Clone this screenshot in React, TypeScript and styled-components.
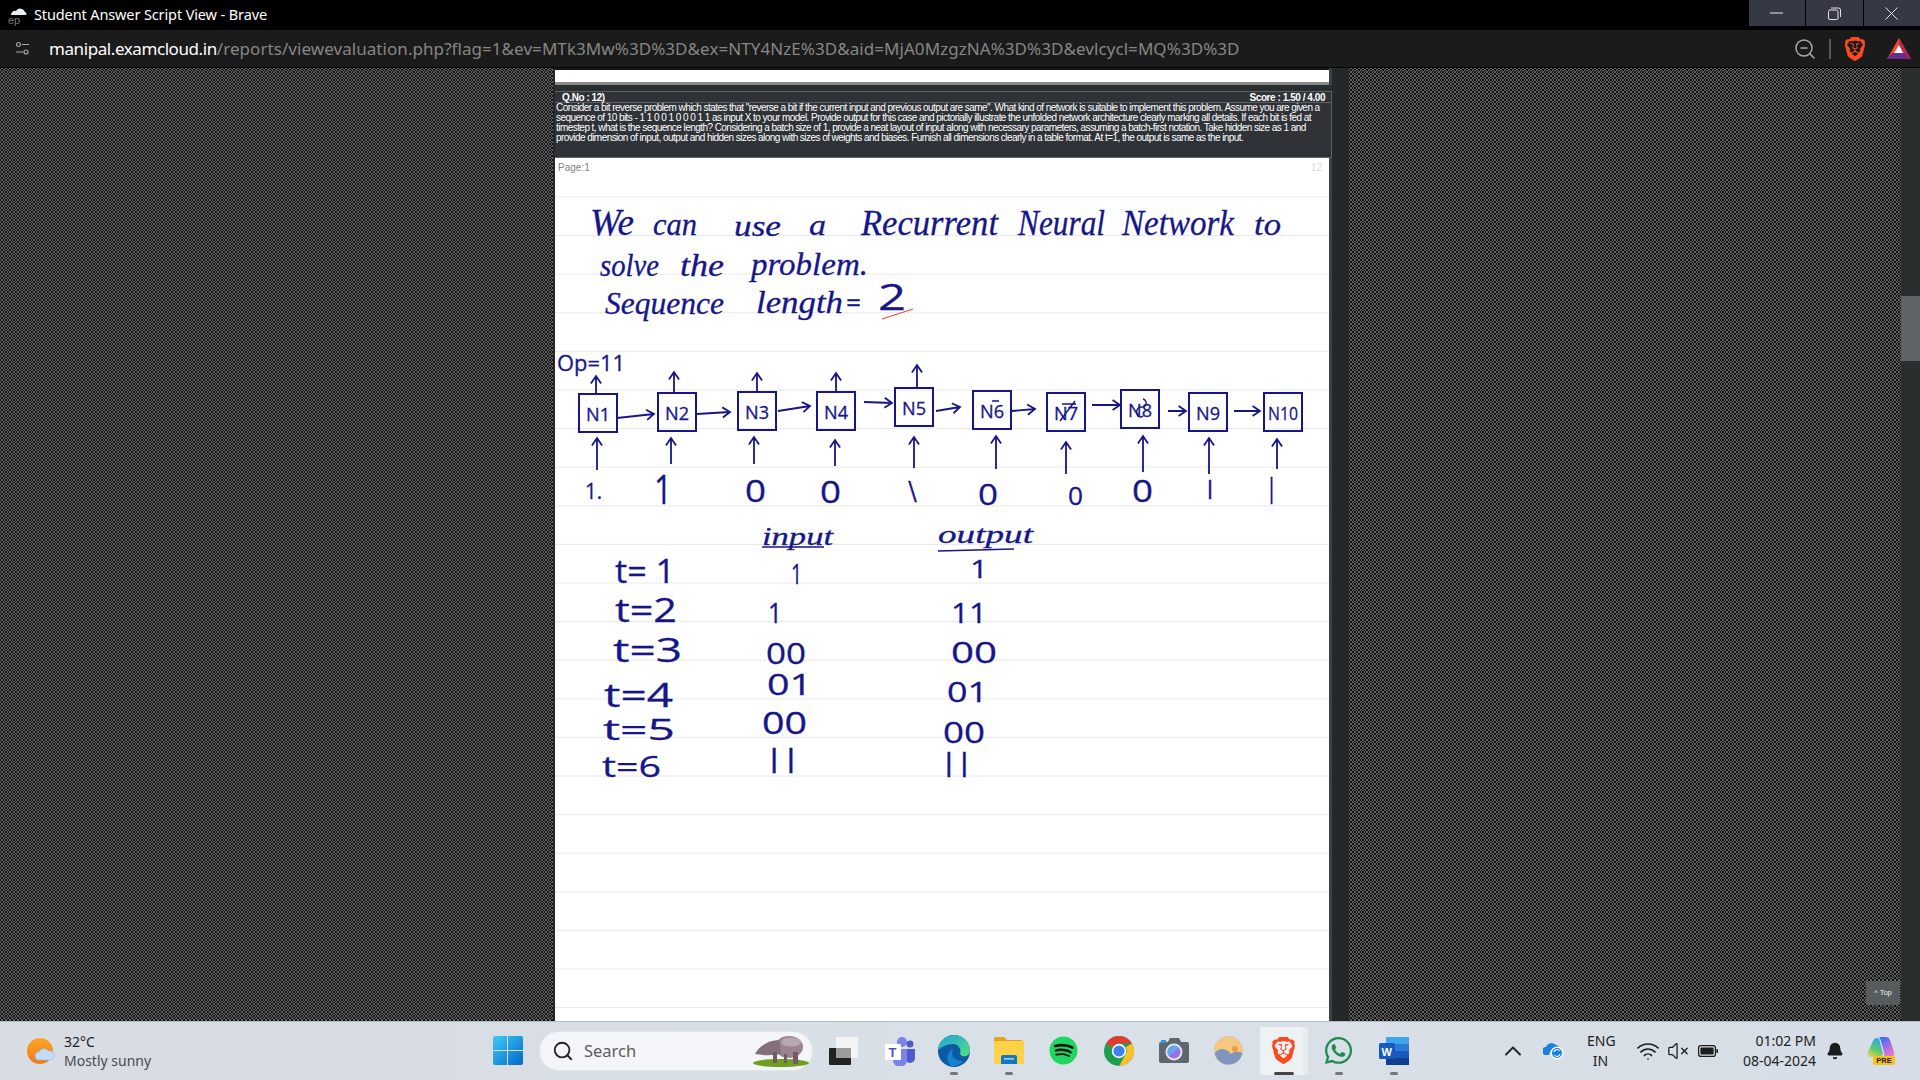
import React from 'react';
import styled, { createGlobalStyle } from 'styled-components';
import { FaSpotify, FaWhatsapp } from 'react-icons/fa';
import { SiBrave } from 'react-icons/si';
import { Bell, ChevronUp, Search, VolumeX, Wifi, ZoomOut } from 'lucide-react';

const cell = (x: number, y: number) => `<rect x='${x}' y='${y}' width='1' height='1'/>`;
const bits = ['01100110', '10011001', '10010110', '01101001', '01101001', '10010110', '10011001', '01100110'];
const weave = bits.map((row, y) => row.split('').map((b, x) => (b === '1' ? cell(x, y) : '')).join('')).join('');
const weaveUri = `url("data:image/svg+xml,${encodeURIComponent(
  `<svg xmlns='http://www.w3.org/2000/svg' width='8' height='8' shape-rendering='crispEdges'><rect width='8' height='8' fill='#121212'/><g fill='#626262'>${weave}</g></svg>`
)}")`;

const GlobalStyle = createGlobalStyle`
  html, body { margin: 0; padding: 0; background: #000; }
  body { font-family: "Noto Sans", "Open Sans", sans-serif; }
`;

const Screen = styled.div`
  width: 1920px;
  height: 1080px;
  display: flex;
  flex-direction: column;
  overflow: hidden;
  position: relative;
`;

const TitleBar = styled.div`
  height: 30px;
  background: #000;
  display: flex;
  align-items: flex-start;
  color: #fff;
`;

const TitleFavicon = styled.div`
  width: 20px;
  height: 20px;
  margin: 6px 0 0 8px;
  color: #777;
  font: 11px/1 "Liberation Sans", sans-serif;
`;

const FaviconLetters = styled.div`
  margin-top: -3px;
`;

const TitleText = styled.div`
  margin-left: 6px;
  line-height: 29px;
  font-size: 14.5px;
  font-family: "Noto Sans", sans-serif;
  letter-spacing: -0.12px;
`;

const WindowButtons = styled.div`
  margin-left: auto;
  display: flex;
  gap: 1px;
`;

const WindowButton = styled.div`
  width: 56.5px;
  height: 26px;
  background: #363846;
  display: flex;
  align-items: center;
  justify-content: center;
  color: #e4e4e8;
`;

const AddressBar = styled.div`
  height: 37px;
  background: #1b1b1b;
  border-bottom: 1px solid #050505;
  display: flex;
  align-items: center;
  padding-left: 15px;
  color: #a8a8a8;
`;

const Url = styled.div`
  margin-left: 19px;
  font-size: 17px;
  letter-spacing: 0.06px;
  color: #868686;
  white-space: nowrap;
`;

const UrlHost = styled.span`
  color: #fff;
  letter-spacing: -0.42px;
`;

const AddressTools = styled.div`
  margin-left: auto;
  display: flex;
  align-items: center;
  padding-right: 9px;
`;

const ToolDivider = styled.div`
  width: 2px;
  height: 20px;
  margin: 0 12px 0 12px;
  background: #5a5a5a;
`;

const BatSlot = styled.div`
  margin-left: 20px;
  display: flex;
`;

const Main = styled.div`
  flex: 1;
  display: flex;
  min-height: 0;
  position: relative;
`;

const Backdrop = styled.div<{ $width: number }>`
  width: ${(p) => p.$width}px;
  background-image: ${weaveUri};
`;

const Sheet = styled.div`
  width: 777px;
  background: #3c4145;
  border-left: 2px solid #24282a;
  display: flex;
  flex-direction: column;
`;

const Gutter = styled.div`
  width: 17px;
  background: #23282a;
`;

const Scrollbar = styled.div`
  width: 19px;
  background: #2a2e2f;
  padding-top: 228px;
`;

const ScrollThumb = styled.div`
  height: 65px;
  background: #5e6367;
`;

const TopButton = styled.div`
  position: absolute;
  right: 20px;
  bottom: 16px;
  width: 34px;
  height: 24px;
  background: #565b5d;
  color: #e8f0f4;
  font: 7.5px/24px "Liberation Sans", sans-serif;
  text-align: center;
`;

const TopBand = styled.div`
  height: 12px;
  flex: none;
  margin-right: 3px;
  background: #fff;
  border-top: 2px solid #16191b;
  border-bottom: 3px solid #8a8a8a;
`;

const BandGap = styled.div`
  height: 6px;
  flex: none;
  background: #2a2d30;
`;

const QuestionPanel = styled.div`
  height: 65px;
  flex: none;
  background: #2f3338;
  border: 1px solid #5b6268;
  border-left-width: 0;
  color: #fff;
  font-family: "Liberation Sans", sans-serif;
`;

const QuestionHead = styled.div`
  height: 10px;
  display: flex;
  justify-content: space-between;
  padding: 0 6px 0 7px;
  font-size: 10px;
  line-height: 11px;
  font-weight: bold;
  letter-spacing: -0.45px;
  border-bottom: 1px solid #5b6268;
`;

const QuestionLine = styled.div`
  font-size: 10px;
  line-height: 10px;
  letter-spacing: -0.55px;
  white-space: nowrap;
  padding-left: 1px;
`;

const AnswerPage = styled.div`
  flex: 1;
  min-height: 0;
  margin-right: 3px;
  background: #fff;
  display: flex;
  flex-direction: column;
`;

const PageHead = styled.div`
  height: 20px;
  flex: none;
  display: flex;
  justify-content: space-between;
  padding: 4px 7px 0 3px;
  box-sizing: border-box;
  font: 10px/12px "Liberation Sans", sans-serif;
  color: #808080;
`;

const PageNo = styled.span`
  color: #dcdcdc;
`;

const ScanSvg = styled.svg`
  display: block;
  flex: 1;
  min-height: 0;
  width: 100%;
  stroke: #16168a;
  fill: none;
`;

const Rule = styled.line`
  stroke: #e2e2e2;
  stroke-width: 1;
  stroke-dasharray: 3 1;
`;

const Ink = styled.text<{ $script?: boolean }>`
  fill: #16168a;
  stroke: #16168a;
  stroke-width: 0.3;
  font-family: ${(p) => (p.$script ? '"Liberation Serif", serif' : '"Open Sans", sans-serif')};
  font-style: ${(p) => (p.$script ? 'italic' : 'normal')};
`;

const Taskbar = styled.div`
  height: 59px;
  flex: none;
  background: linear-gradient(90deg, #d8dce3, #d9e0e7 60%, #d6dde6);
  display: flex;
  align-items: center;
  color: #1d1d1d;
  border-top: 1px solid #b6bac0;
  box-sizing: border-box;
  padding-bottom: 1px;
`;

const Weather = styled.div`
  width: 480px;
  flex: none;
  padding-left: 27px;
  box-sizing: border-box;
  display: flex;
  align-items: center;
  gap: 9px;
`;

const WeatherText = styled.div`
  font-size: 14px;
  line-height: 19px;
`;

const WeatherNote = styled.div`
  color: #4b4b4b;
`;

const TaskCell = styled.div<{ $state?: 'running' | 'active' }>`
  width: 55px;
  height: 48px;
  flex: none;
  display: flex;
  align-items: center;
  justify-content: center;
  position: relative;
  border-radius: 5px;
  ${(p) =>
    p.$state === 'active'
      ? `
    background: linear-gradient(#eef2f5, #eef2f5) 4px 0 / 43px 48px no-repeat,
      linear-gradient(#e6ebf0, #e6ebf0) 47px 0 / 5px 48px no-repeat;
    `
      : ''}
  &::after {
    content: '';
    display: ${(p) => (p.$state ? 'block' : 'none')};
    position: absolute;
    bottom: 0;
    left: 50%;
    transform: translateX(-50%);
    width: ${(p) => (p.$state === 'active' ? '20px' : '8px')};
    height: 3px;
    border-radius: 2px;
    background: ${(p) => (p.$state === 'active' ? '#444' : '#777')};
  }
`;

const SearchPill = styled.div`
  width: 272px;
  height: 38px;
  margin: 0 4px 0 5px;
  flex: none;
  border-radius: 19px;
  background: #f3f5f8;
  box-shadow: 0 0 0 1px #e2e6ea;
  display: flex;
  align-items: center;
  padding: 0 3px 0 12px;
  box-sizing: border-box;
  color: #5c5c5c;
  font-size: 16.5px;
`;

const SearchLabel = styled.span`
  margin-left: 10px;
  flex: 1;
`;

const SpotifyGlyph = styled(FaSpotify)`
  background: radial-gradient(circle, #111 60%, transparent 63%);
  border-radius: 50%;
`;

const TrayItem = styled.div<{ $w: number; $gap: number }>`
  width: ${(p) => p.$w}px;
  margin-left: ${(p) => p.$gap}px;
  flex: none;
  display: flex;
  align-items: center;
  justify-content: center;
  & > svg {
    flex: none;
  }
`;

const TrayText = styled.div<{ $right?: boolean }>`
  font-size: 14px;
  line-height: 20px;
  white-space: nowrap;
  text-align: ${(p) => (p.$right ? 'right' : 'center')};
  width: 100%;
  color: #222;
`;

const ProIcon = styled.div`
  position: relative;
  width: 29px;
  height: 28px;
`;

const PreBadge = styled.span`
  position: absolute;
  right: 0;
  bottom: 0;
  width: 22px;
  height: 9px;
  border-radius: 2px;
  background: #f6c31c;
  color: #222;
  font: bold 7.5px/9px "Liberation Sans", sans-serif;
  text-align: center;
`;

const TeamsT = styled.text`
  fill: #4b53bc;
  font: bold 13px "Liberation Sans", sans-serif;
`;

const WordW = styled.text`
  fill: #fff;
  font: bold 11px "Liberation Sans", sans-serif;
`;

const question = [
  'Consider a bit reverse problem which states that "reverse a bit if the current input and previous output are same". What kind of network is suitable to implement this problem. Assume you are given a',
  'sequence of 10 bits - 1 1 0 0 1 0 0 0 1 1 as input X to your model. Provide output for this case and pictorially illustrate the unfolded network architecture clearly marking all details. If each bit is fed at',
  'timestep t, what is the sequence length? Considering a batch size of 1, provide a neat layout of input along with necessary parameters, assuming a batch-first notation. Take hidden size as 1 and',
  'provide dimension of input, output and hidden sizes along with sizes of weights and biases. Furnish all dimensions clearly in a table format. At t=1, the output is same as the input.',
];

type Word = [string, number, number, number, number];

// text, left x, baseline y, width, font size (page pixels of the scan)
const scriptWords: Word[] = [
  ['We', 590, 235, 44, 38],
  ['can', 653, 235, 44, 32],
  ['use', 734, 236, 47, 30],
  ['a', 809, 235, 17, 30],
  ['Recurrent', 861, 235, 137, 36],
  ['Neural', 1018, 235, 87, 36],
  ['Network', 1122, 235, 112, 36],
  ['to', 1254, 235, 27, 32],
  ['solve', 600, 276, 59, 32],
  ['the', 680, 276, 44, 32],
  ['problem.', 751, 275, 117, 32],
  ['Sequence', 605, 314, 119, 32],
  ['length', 756, 313, 87, 32],
  ['input', 762, 545, 71, 26],
  ['output', 938, 543, 95, 26],
];

const plainWords: Word[] = [
  ['=', 846, 312, 15, 26],
  ['2', 878, 310, 28, 36],
  ['Op=11', 557, 371, 68, 22],
  ['1.', 585, 499, 17, 22],
  ['1', 654, 504, 18, 40],
  ['0', 745, 502, 21, 31],
  ['0', 820, 503, 21, 31],
  ['\\', 908, 502, 9, 30],
  ['0', 978, 505, 20, 29],
  ['0', 1068, 505, 15, 26],
  ['0', 1132, 502, 21, 31],
  ['l', 1207, 499, 6, 26],
  ['l', 1269, 504, 5, 36],
  ['t= 1', 615, 583, 60, 32],
  ['1', 791, 584, 11, 28],
  ['1', 970, 578, 18, 26],
  ['t=2', 615, 622, 62, 32],
  ['1', 768, 623, 14, 28],
  ['11', 951, 623, 36, 28],
  ['t=3', 613, 662, 69, 32],
  ['00', 766, 664, 40, 29],
  ['00', 951, 663, 46, 29],
  ['t=4', 604, 707, 69, 32],
  ['01', 767, 695, 45, 29],
  ['01', 947, 702, 41, 28],
  ['t=5', 603, 740, 72, 30],
  ['00', 762, 734, 45, 31],
  ['00', 943, 743, 42, 29],
  ['t=6', 602, 777, 59, 30],
  ['l l', 770, 773, 25, 32],
  ['l l', 945, 777, 23, 32],
];

const boxes: [string, number, number][] = [
  ['N1', 579, 394],
  ['N2', 658, 393],
  ['N3', 738, 392],
  ['N4', 817, 392],
  ['N5', 895, 388],
  ['N6', 973, 391],
  ['N7', 1047, 393],
  ['N8', 1121, 390],
  ['N9', 1189, 393],
  ['N10', 1264, 393],
];

const arrows: [number, number, number, number][] = [
  [596, 394, 596, 376],
  [674, 393, 674, 372],
  [757, 392, 757, 373],
  [836, 393, 836, 373],
  [917, 387, 917, 365],
  [597, 470, 597, 438],
  [671, 464, 671, 438],
  [754, 464, 754, 437],
  [835, 466, 835, 440],
  [914, 468, 914, 437],
  [996, 469, 996, 436],
  [1066, 474, 1066, 442],
  [1143, 472, 1143, 436],
  [1209, 474, 1209, 438],
  [1277, 469, 1277, 439],
  [617, 418, 654, 414],
  [697, 414, 730, 412],
  [778, 411, 810, 406],
  [864, 402, 892, 403],
  [936, 411, 960, 407],
  [1012, 411, 1035, 409],
  [1092, 405, 1120, 405],
  [1168, 411, 1186, 411],
  [1234, 411, 1260, 411],
];

const ruleYs = Array.from({ length: 22 }, (_, i) => 197 + i * 38.6);

function Arrow({ from }: { from: [number, number, number, number] }) {
  const [x1, y1, x2, y2] = from;
  const a = Math.atan2(y2 - y1, x2 - x1);
  const len = 9;
  const hx1 = x2 - len * Math.cos(a - 0.6);
  const hy1 = y2 - len * Math.sin(a - 0.6);
  const hx2 = x2 - len * Math.cos(a + 0.6);
  const hy2 = y2 - len * Math.sin(a + 0.6);
  return <path d={`M${x1} ${y1}L${x2} ${y2}M${hx1} ${hy1}L${x2} ${y2}L${hx2} ${hy2}`} strokeWidth={1.8} />;
}

function AnswerScan() {
  return (
    <ScanSvg viewBox="0 0 774 843" preserveAspectRatio="xMinYMin slice">
      <g transform="translate(-555 -178)">
        {ruleYs.map((y) => (
          <Rule key={y} x1={555} x2={1329} y1={y} y2={y} />
        ))}
        {scriptWords.map(([t, x, y, w, s]) => (
          <Ink key={`${t}${x}`} $script x={x} y={y} textLength={w} lengthAdjust="spacingAndGlyphs" fontSize={s}>
            {t}
          </Ink>
        ))}
        {plainWords.map(([t, x, y, w, s]) => (
          <Ink key={`${t}${x}${y}`} x={x} y={y} textLength={w} lengthAdjust="spacingAndGlyphs" fontSize={s}>
            {t}
          </Ink>
        ))}
        <path d="M882 319L913 309" stroke="#f44" strokeWidth={1.2} />
        <path d="M762 547H824M938 551L1014 549" strokeWidth={1.6} />
        {boxes.map(([label, x, y]) => (
          <g key={label}>
            <rect x={x} y={y} width={38} height={38} strokeWidth={2} />
            <Ink
              x={x + (label === 'N10' ? 4 : 7)}
              y={y + 27}
              textLength={label === 'N10' ? 30 : 24}
              lengthAdjust="spacingAndGlyphs"
              fontSize={19}
            >
              {label}
            </Ink>
          </g>
        ))}
        <path d="M1060 421L1075 401M1062 404H1076M992 401H999M1143 399a4 4 0 1 1 -2 8a4 5 0 1 0 2 9" strokeWidth={1.4} />
        {arrows.map((a) => (
          <Arrow key={a.join()} from={a} />
        ))}
      </g>
    </ScanSvg>
  );
}

function TuneIcon() {
  return (
    <svg width="15" height="15" viewBox="0 0 15 15" fill="none" stroke="#a8a8a8" strokeWidth="1.2">
      <circle cx="3.5" cy="3.5" r="2" />
      <path d="M7 3.5H14M1 11H8" />
      <circle cx="11" cy="11" r="2" />
    </svg>
  );
}

function BatIcon() {
  return (
    <svg width="24" height="21" viewBox="0 0 24 21">
      <path d="M12 0L24 21H0Z" fill="#ff4724" />
      <path d="M0 21L5 15H19L24 21Z" fill="#662d91" />
      <path d="M12 7L17 15H7Z" fill="#fff" />
      <path d="M12 0L24 21H19L12 7Z" fill="#9e1f63" opacity="0.7" />
    </svg>
  );
}

function WeatherIcon() {
  return (
    <svg width="28" height="26" viewBox="0 0 28 26">
      <defs>
        <linearGradient id="sun" x1="0" y1="0" x2="0" y2="1">
          <stop offset="0" stopColor="#f9a825" />
          <stop offset="1" stopColor="#f0781c" />
        </linearGradient>
      </defs>
      <circle cx="13" cy="13" r="13" fill="url(#sun)" />
      <path d="M12 22a4 4 0 0 1 0-8 5 5 0 0 1 9-1 4.5 4.5 0 0 1 3 9Z" fill="#c4dcf7" stroke="#8fb8e6" strokeWidth="0.6" />
    </svg>
  );
}

function StartIcon() {
  return (
    <svg width="30" height="29" viewBox="0 0 30 29">
      <defs>
        <linearGradient id="win" x1="0" y1="0" x2="1" y2="1">
          <stop offset="0" stopColor="#3ccbf8" />
          <stop offset="1" stopColor="#0667c8" />
        </linearGradient>
      </defs>
      <path d="M0 2a2 2 0 0 1 2-2H14V14H0ZM15 0H28a2 2 0 0 1 2 2V14H15ZM0 15H14V29H2a2 2 0 0 1-2-2ZM15 15H30V27a2 2 0 0 1-2 2H15Z" fill="url(#win)" />
    </svg>
  );
}

function TapirPicture() {
  return (
    <svg width="58" height="33" viewBox="0 0 58 33">
      <ellipse cx="30" cy="29" rx="28" ry="4" fill="#6f9f1c" />
      <ellipse cx="38" cy="13" rx="14" ry="11" fill="#9c8390" />
      <path d="M28 6C18 6 8 12 4 20C10 21 18 22 30 20Z" fill="#84707d" />
      <path d="M22 18H26V29H22ZM42 18H47V30H42ZM33 20H36V29H33Z" fill="#6e5c68" />
      <ellipse cx="40" cy="8" rx="10" ry="4.5" fill="#b8a6b0" />
    </svg>
  );
}

function TaskViewIcon() {
  return (
    <svg width="30" height="28" viewBox="0 0 30 28">
      <rect x="0" y="11" width="22" height="17" rx="1" fill="#222" />
      <rect x="7" y="0" width="22" height="21" rx="1" fill="#f4f4f4" />
      <rect x="7" y="11" width="15" height="10" fill="#9c9c9c" />
    </svg>
  );
}

function TeamsIcon() {
  return (
    <svg width="32" height="30" viewBox="0 0 32 30">
      <circle cx="19" cy="6" r="5" fill="#7b83eb" />
      <circle cx="27" cy="8" r="3.5" fill="#5059c9" />
      <path d="M22 13H32V22a5 5 0 0 1-10 0Z" fill="#5059c9" />
      <path d="M10 13H24V24a7 7 0 0 1-14 0Z" fill="#7b83eb" />
      <rect x="2" y="8" width="16" height="16" rx="1" fill="#fff" />
      <TeamsT x="5.5" y="21">T</TeamsT>
    </svg>
  );
}

function EdgeIcon() {
  return (
    <svg width="32" height="32" viewBox="0 0 32 32">
      <defs>
        <linearGradient id="edgeTop" x1="0" y1="0" x2="1" y2="1">
          <stop offset="0" stopColor="#1ba3dc" />
          <stop offset="1" stopColor="#54e07c" />
        </linearGradient>
      </defs>
      <circle cx="16" cy="16" r="16" fill="#0c59a4" />
      <path d="M0 15C1 6 8 0 16 0C25 0 32 7 32 15C32 22 24 23 22 19C24 14 20 9 15 9C8 9 4 12 0 15Z" fill="url(#edgeTop)" />
      <path d="M13 31C8 27 8 17 15 14C12 20 17 27 25 26C22 30 17 32 13 31Z" fill="#1383cf" />
    </svg>
  );
}

function FolderIcon() {
  return (
    <svg width="30" height="27" viewBox="0 0 30 27">
      <path d="M0 2a2 2 0 0 1 2-2H10L13 3H28V7H0Z" fill="#e0a31b" />
      <rect x="0" y="4" width="30" height="23" rx="1" fill="#fdd249" />
      <path d="M7 27V20a2 2 0 0 1 2-2H21a2 2 0 0 1 2 2V27Z" fill="#1277c2" />
      <rect x="10" y="21" width="10" height="1.6" fill="#9bd1f2" />
    </svg>
  );
}

function ChromeIcon() {
  return (
    <svg width="30" height="30" viewBox="0 0 30 30">
      <circle cx="15" cy="15" r="15" fill="#1e9e4f" />
      <path d="M15 0A15 15 0 0 1 28 7.5H15A7.5 7.5 0 0 0 8.5 11.3L2 7.5A15 15 0 0 1 15 0Z" fill="#e33b2e" />
      <path d="M28 7.5A15 15 0 0 1 15 30L21.5 18.8A7.5 7.5 0 0 0 21.5 11.2Z" fill="#fbc02d" />
      <circle cx="15" cy="15" r="7.2" fill="#fff" />
      <circle cx="15" cy="15" r="5.6" fill="#3f7ff0" />
    </svg>
  );
}

function CameraIcon() {
  return (
    <svg width="30" height="25" viewBox="0 0 30 25">
      <path d="M2 4H9L11 0H20L22 4H28a2 2 0 0 1 2 2V23a2 2 0 0 1-2 2H2a2 2 0 0 1-2-2V6a2 2 0 0 1 2-2Z" fill="#5f6670" />
      <rect x="2" y="2" width="5" height="3" fill="#2f9be0" />
      <circle cx="15" cy="14" r="8.5" fill="#e4e6ea" />
      <circle cx="15" cy="14" r="6.5" fill="#a06fe6" />
      <path d="M15 7.5a6.5 6.5 0 0 0-5 10.6L20 10A6.5 6.5 0 0 0 15 7.5Z" fill="#5ea8f0" />
    </svg>
  );
}

function PhotosIcon() {
  return (
    <svg width="29" height="29" viewBox="0 0 29 29">
      <defs>
        <clipPath id="photoClip">
          <circle cx="14.5" cy="14.5" r="14" />
        </clipPath>
      </defs>
      <circle cx="14.5" cy="14.5" r="14.5" fill="#c2c6cc" />
      <g clipPath="url(#photoClip)">
        <rect width="29" height="29" fill="#f8c77e" />
        <path d="M0 18C6 10 13 13 17 18C21 15 26 15 29 18V29H0Z" fill="#7f95bd" />
        <circle cx="21" cy="13" r="3" fill="#ee9a4d" />
      </g>
    </svg>
  );
}

function WordIcon() {
  return (
    <svg width="30" height="28" viewBox="0 0 30 28">
      <rect x="7" y="0" width="23" height="28" rx="1.5" fill="#2b7cd3" />
      <rect x="7" y="0" width="23" height="7" fill="#41a5ee" />
      <rect x="7" y="14" width="23" height="7" fill="#185abd" />
      <rect x="7" y="21" width="23" height="7" fill="#103f91" />
      <rect x="0" y="6" width="16" height="16" rx="1.5" fill="#185abd" />
      <WordW x="2.5" y="18.5">W</WordW>
    </svg>
  );
}

function OneDriveIcon() {
  return (
    <svg width="21" height="19" viewBox="0 0 21 19">
      <path d="M3 14a4 4 0 0 1 0-8 6 6 0 0 1 10-2 4.5 4.5 0 0 1 4 5H8L6 14Z" fill="#1a82dc" />
      <circle cx="14" cy="12" r="6.5" fill="#fff" />
      <circle cx="14" cy="12" r="5" fill="#1a82dc" />
      <path d="M11 11a3 3 0 0 1 5.5-1M17 13a3 3 0 0 1-5.5 1" stroke="#fff" strokeWidth="1.1" fill="none" />
    </svg>
  );
}

function BatteryIcon() {
  return (
    <svg width="20" height="12" viewBox="0 0 20 12">
      <rect x="0.6" y="0.6" width="16.8" height="10.8" rx="2.2" fill="none" stroke="#1c1c1c" strokeWidth="1.2" />
      <rect x="2.4" y="2.4" width="13.2" height="7.2" rx="1" fill="#1c1c1c" />
      <rect x="18.4" y="4" width="1.6" height="4" rx="0.6" fill="#1c1c1c" />
    </svg>
  );
}

function CopilotGlyph() {
  return (
    <svg width="29" height="22" viewBox="0 0 29 22">
      <defs>
        <linearGradient id="coA" x1="0.6" y1="0" x2="0.2" y2="1">
          <stop offset="0" stopColor="#2aa9ee" />
          <stop offset="0.55" stopColor="#59c96f" />
          <stop offset="1" stopColor="#e9d54e" />
        </linearGradient>
        <linearGradient id="coB" x1="0.3" y1="0" x2="0.8" y2="1">
          <stop offset="0" stopColor="#3a6ff0" />
          <stop offset="0.5" stopColor="#b06ce8" />
          <stop offset="1" stopColor="#f07fc0" />
        </linearGradient>
      </defs>
      <path d="M11 1C9 1 8 2 7 4L2 15C1 18 2 20 5 20H13C15 20 16 19 17 17L14 5C13.500 2 13 1 11 1Z" fill="url(#coA)" />
      <path d="M13 0H20C22 0 23 1 24 3L28 15C29 18 27 21 25 21H16C18 20 19 18 18 15L15 4C14.500 2 14 1 13 0Z" fill="url(#coB)" />
    </svg>
  );
}

const tasks: { key: string; icon: React.ReactNode; state?: 'running' | 'active' }[] = [
  { key: 'view', icon: <TaskViewIcon /> },
  { key: 'teams', icon: <TeamsIcon /> },
  { key: 'edge', icon: <EdgeIcon />, state: 'running' },
  { key: 'files', icon: <FolderIcon />, state: 'running' },
  { key: 'spotify', icon: <SpotifyGlyph size={29} color="#1ed760" /> },
  { key: 'chrome', icon: <ChromeIcon /> },
  { key: 'camera', icon: <CameraIcon /> },
  { key: 'photos', icon: <PhotosIcon /> },
  { key: 'brave', icon: <SiBrave size={27} color="#fb4a1e" />, state: 'active' },
  { key: 'whatsapp', icon: <FaWhatsapp size={31} color="#1f8a52" />, state: 'running' },
  { key: 'word', icon: <WordIcon />, state: 'running' },
];

export default function App() {
  return (
    <Screen>
      <GlobalStyle />
      <TitleBar>
        <TitleFavicon>
          <svg width="20" height="10" viewBox="0 0 20 10" fill="#e8eef2">
            <path d="M3 9a4 4 0 0 1 5-4 5 5 0 0 1 9 1 2 2 0 0 1 1 3Z" />
          </svg>
          <FaviconLetters>ep</FaviconLetters>
        </TitleFavicon>
        <TitleText>Student Answer Script View - Brave</TitleText>
        <WindowButtons>
          <WindowButton>
            <svg width="13" height="2" viewBox="0 0 13 2">
              <path d="M0 1H13" stroke="currentColor" />
            </svg>
          </WindowButton>
          <WindowButton>
            <svg width="13" height="13" viewBox="0 0 13 13" fill="none" stroke="currentColor">
              <rect x="0.5" y="3" width="9.5" height="9.5" rx="1.5" />
              <path d="M3 1H10.5a2 2 0 0 1 2 2V10" />
            </svg>
          </WindowButton>
          <WindowButton>
            <svg width="13" height="13" viewBox="0 0 13 13" stroke="currentColor">
              <path d="M0.5 0.5L12.5 12.5M12.5 0.5L0.5 12.5" />
            </svg>
          </WindowButton>
        </WindowButtons>
      </TitleBar>
      <AddressBar>
        <TuneIcon />
        <Url>
          <UrlHost>manipal.examcloud.in</UrlHost>
          /reports/viewevaluation.php?flag=1&amp;ev=MTk3Mw%3D%3D&amp;ex=NTY4NzE%3D&amp;aid=MjA0MzgzNA%3D%3D&amp;evlcycl=MQ%3D%3D
        </Url>
        <AddressTools>
          <ZoomOut size={24} strokeWidth={1.5} />
          <ToolDivider />
          <SiBrave size={24} color="#fb4a1e" />
          <BatSlot>
            <BatIcon />
          </BatSlot>
        </AddressTools>
      </AddressBar>
      <Main>
        <Backdrop $width={553} />
        <Sheet>
          <TopBand />
          <BandGap />
          <QuestionPanel>
            <QuestionHead>
              <span>Q.No : 12)</span>
              <span>Score : 1.50 / 4.00</span>
            </QuestionHead>
            {question.map((line) => (
              <QuestionLine key={line}>{line}</QuestionLine>
            ))}
          </QuestionPanel>
          <AnswerPage>
            <PageHead>
              <span>Page:1</span>
              <PageNo>12</PageNo>
            </PageHead>
            <AnswerScan />
          </AnswerPage>
        </Sheet>
        <Gutter />
        <Backdrop $width={552} />
        <Scrollbar>
          <ScrollThumb />
        </Scrollbar>
        <TopButton>^ Top</TopButton>
      </Main>
      <Taskbar>
        <Weather>
          <WeatherIcon />
          <WeatherText>
            <div>32°C</div>
            <WeatherNote>Mostly sunny</WeatherNote>
          </WeatherText>
        </Weather>
        <TaskCell>
          <StartIcon />
        </TaskCell>
        <SearchPill>
          <Search size={22} strokeWidth={2} color="#222" />
          <SearchLabel>Search</SearchLabel>
          <TapirPicture />
        </SearchPill>
        {tasks.map((t) => (
          <TaskCell key={t.key} $state={t.state}>
            {t.icon}
          </TaskCell>
        ))}
        <TrayItem $w={14} $gap={85}>
          <ChevronUp size={28} strokeWidth={1.6} color="#222" />
        </TrayItem>
        <TrayItem $w={20} $gap={23}>
          <OneDriveIcon />
        </TrayItem>
        <TrayItem $w={27} $gap={24}>
          <TrayText>
            ENG
            <br />
            IN
          </TrayText>
        </TrayItem>
        <TrayItem $w={20} $gap={24}>
          <Wifi size={24} strokeWidth={1.7} color="#1c1c1c" />
        </TrayItem>
        <TrayItem $w={19} $gap={10}>
          <VolumeX size={22} strokeWidth={1.4} color="#1c1c1c" />
        </TrayItem>
        <TrayItem $w={20} $gap={11}>
          <BatteryIcon />
        </TrayItem>
        <TrayItem $w={90} $gap={8}>
          <TrayText $right>
            01:02 PM
            <br />
            08-04-2024
          </TrayText>
        </TrayItem>
        <TrayItem $w={16} $gap={11}>
          <Bell size={18} fill="#1c1c1c" color="#1c1c1c" />
        </TrayItem>
        <TrayItem $w={29} $gap={23}>
          <ProIcon>
            <CopilotGlyph />
            <PreBadge>PRE</PreBadge>
          </ProIcon>
        </TrayItem>
      </Taskbar>
    </Screen>
  );
}
